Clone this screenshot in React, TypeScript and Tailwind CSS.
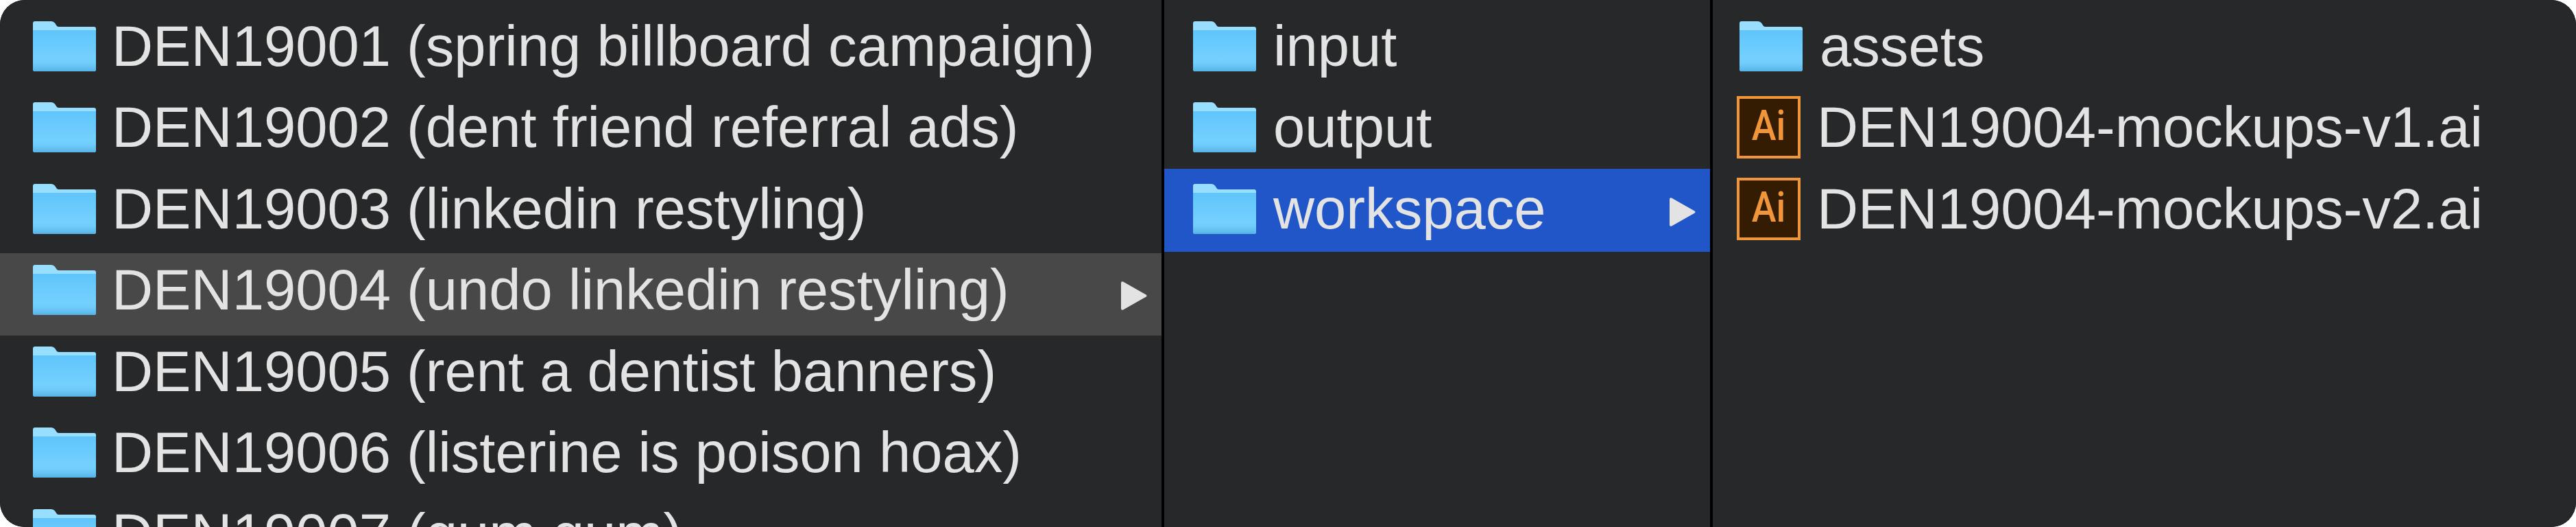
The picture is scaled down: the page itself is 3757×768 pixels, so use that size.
const FONT = "font-['Liberation_Sans',Arial,sans-serif]";

const col1 = [
  'DEN19001 (spring billboard campaign)',
  'DEN19002 (dent friend referral ads)',
  'DEN19003 (linkedin restyling)',
  'DEN19004 (undo linkedin restyling)',
  'DEN19005 (rent a dentist banners)',
  'DEN19006 (listerine is poison hoax)',
  'DEN19007 (gum gum)',
];

function FolderIcon() {
  return (
    <svg width="92" height="73" viewBox="0 0 92 73" className="shrink-0">
      <defs>
        <linearGradient id="folderBody" x1="0" y1="0" x2="0" y2="1">
          <stop offset="0" stopColor="#60c5fb" />
          <stop offset="0.7" stopColor="#74d0fe" />
          <stop offset="0.8" stopColor="#70cdfc" />
          <stop offset="0.92" stopColor="#62bfef" />
          <stop offset="1" stopColor="#56b2e4" />
        </linearGradient>
      </defs>
      <path d="M3 0h24q3 0 5 2.500l3 4.500q1 1 3 1h51q3 0 3 3v59q0 3-3 3H3q-3 0-3-3V3q0-3 3-3z" fill="#97deff" />
      <path d="M0 13h92v57q0 3-3 3H3q-3 0-3-3z" fill="url(#folderBody)" />
    </svg>
  );
}

function AiIcon() {
  return (
    <div className="-ml-[4px] flex h-[91px] w-[93px] shrink-0 items-center justify-center border-[4px] border-[#f0953a] bg-[#331c02] pb-[5px]">
      <span className="scale-x-[0.87] font-['Roboto',sans-serif] text-[62px] leading-none font-medium text-[#f0953a]">Ai</span>
    </div>
  );
}

function Arrow() {
  return (
    <svg width="38" height="42" viewBox="0 0 38 42" className="absolute right-[21px] top-[calc(50%-19px)]">
      <path d="M3 0.500L36.500 19.500q2 1.500 0 3L3 41.500q-3 1-3-2V2.500q0-3 3-2z" fill="#e3e3e4" />
    </svg>
  );
}

function Row({ icon, label, highlight, className }: { icon: React.ReactNode; label: string; highlight?: string; className: string }) {
  return (
    <div className="relative h-[118.5px] whitespace-nowrap">
      {highlight && (
        <div className={`absolute inset-x-0 ${highlight}`}>
          <Arrow />
        </div>
      )}
      <div className={`relative flex h-full items-center ${className}`}>
        {icon}
        <span className="text-[83.2px] leading-none text-[#e3e3e4]">{label}</span>
      </div>
    </div>
  );
}

export default function App() {
  return (
    <div className="h-[768px] w-[3757px] overflow-hidden bg-white">
      <div className={`flex h-full overflow-hidden rounded-[36px] bg-black ${FONT}`}>
        <div className="w-[1694px] shrink-0 overflow-hidden bg-[#26282a] pt-[8px]">
          {col1.map((label, i) => (
            <Row
              key={label}
              icon={<FolderIcon />}
              label={label}
              className="gap-[23px] pl-[48px]"
              highlight={i === 3 ? 'top-[5.5px] -bottom-[7px] bg-[#484848]' : undefined}
            />
          ))}
        </div>
        <div className="ml-[4px] w-[796px] shrink-0 bg-[#26282a] pt-[8px]">
          <Row icon={<FolderIcon />} label="input" className="gap-[25px] pl-[42px]" />
          <Row icon={<FolderIcon />} label="output" className="gap-[25px] pl-[42px]" />
          <Row icon={<FolderIcon />} label="workspace" className="gap-[25px] pl-[42px]" highlight="top-[1px] -bottom-[3.5px] bg-[#2156c9]" />
        </div>
        <div className="ml-[4px] flex-1 bg-[#26282a] pt-[8px]">
          <Row icon={<FolderIcon />} label="assets" className="gap-[25px] pl-[39px]" />
          <Row icon={<AiIcon />} label="DEN19004-mockups-v1.ai" className="gap-[24px] pl-[39px]" />
          <Row icon={<AiIcon />} label="DEN19004-mockups-v2.ai" className="gap-[24px] pl-[39px]" />
        </div>
      </div>
    </div>
  );
}
